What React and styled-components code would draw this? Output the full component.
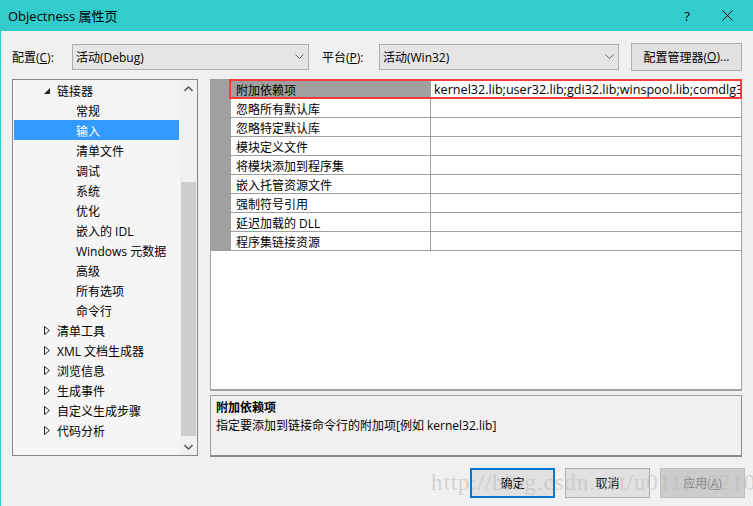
import React from "react";
import styled, { createGlobalStyle } from "styled-components";

const Global = createGlobalStyle`
    html, body {
        margin: 0;
        padding: 0;
        background: #f0f0f0;
    }
    body {
        font-family: "Open Sans", "Noto Sans CJK SC", sans-serif;
        font-size: 12px;
        color: #000;
    }
`;

const Window = styled.div`
    position: relative;
    width: 753px;
    height: 506px;
    box-sizing: border-box;
    border-left: 1px solid #33cccc;
    background: #f0f0f0;
    overflow: hidden;
`;

const TitleBar = styled.div`
    height: 31px;
    background: #33cccc;
    display: flex;
    align-items: center;
    padding-left: 7px;
    padding-right: 6px;
    font-size: 13px;
`;

const TitleText = styled.div`
    flex: 1;
`;

const TitleButton = styled.div`
    width: 40px;
    display: flex;
    justify-content: center;
    align-items: center;
    font-size: 13px;
`;

const Body = styled.div`
    padding: 12px 8px 0 11px;
`;

const ConfigRow = styled.div`
    display: flex;
    align-items: center;
    height: 27px;
`;

const Label = styled.div`
    width: ${(p) => p.w}px;
    white-space: nowrap;
`;

const U = styled.span`
    text-decoration: underline;
`;

const Combo = styled.div`
    width: ${(p) => p.w}px;
    height: 26px;
    box-sizing: border-box;
    border: 1px solid #acacac;
    background: #e5e5e5;
    display: flex;
    align-items: center;
    padding-left: 3px;
    margin-right: ${(p) => p.mr}px;
`;

const ComboText = styled.div`
    flex: 1;
`;

const ComboArrow = styled.div`
    width: 18px;
    display: flex;
    justify-content: center;
`;

const Button = styled.div`
    width: ${(p) => p.w || 85}px;
    height: ${(p) => p.h || 30}px;
    box-sizing: border-box;
    display: flex;
    align-items: center;
    justify-content: center;
    background: ${(p) => (p.disabled ? "#cccccc" : "#e1e1e1")};
    border: ${(p) => (p.primary ? "2px solid #0078d7" : p.disabled ? "1px solid #bfbfbf" : "1px solid #adadad")};
    color: ${(p) => (p.disabled ? "#838383" : "#000")};
`;

const Main = styled.div`
    display: flex;
    margin-top: 9px;
    height: 378px;
`;

const Tree = styled.div`
    width: 186px;
    height: 377px;
    box-sizing: border-box;
    border: 1px solid #828790;
    background: #f5f5f5;
    display: flex;
    margin-right: 12px;
`;

const TreeList = styled.div`
    flex: 1;
    padding: 0 1px;
    overflow: hidden;
`;

const TreeItem = styled.div`
    height: 20px;
    box-sizing: border-box;
    padding-top: 1px;
    display: flex;
    align-items: center;
    padding-left: ${(p) => p.indent}px;
    background: ${(p) => (p.selected ? "#3399ff" : "transparent")};
    color: ${(p) => (p.selected ? "#fff" : "#000")};
    white-space: nowrap;
`;

const Toggle = styled.div`
    width: 13px;
    display: flex;
    align-items: center;
`;

const ScrollBar = styled.div`
    width: 17px;
    display: flex;
    flex-direction: column;
    background: #f0f0f0;
`;

const ScrollArrow = styled.div`
    height: 17px;
    display: flex;
    align-items: center;
    justify-content: center;
`;

const ScrollTrack = styled.div`
    flex: 1;
    display: flex;
    flex-direction: column;
    padding-top: 85px;
    padding-bottom: 2px;
`;

const Thumb = styled.div`
    flex: 1;
    margin: 0 1px;
    background: #cdcdcd;
`;

const RightCol = styled.div`
    width: 532px;
    display: flex;
    flex-direction: column;
`;

const Grid = styled.div`
    height: 313px;
    box-sizing: border-box;
    border: 1px solid #a0a0a0;
    border-bottom-width: 2px;
    background: #fff;
    display: flex;
    align-items: flex-start;
`;

const Gutter = styled.div`
    flex: 0 0 20px;
    height: 171px;
    background: #a0a0a0;
`;

const Rows = styled.div`
    flex: 1;
    min-width: 0;
`;

const Row = styled.div`
    position: relative;
    height: 19px;
    display: flex;
    border-bottom: 1px solid #a0a0a0;
    box-sizing: border-box;

    &::after {
        content: "";
        display: ${(p) => (p.marked ? "block" : "none")};
        position: absolute;
        left: -2px;
        right: -1px;
        top: -1px;
        bottom: -1px;
        border: 2px solid #ff3b3b;
    }
`;

const NameCell = styled.div`
    flex: 0 0 200px;
    padding: 1px 0 0 5px;
    box-sizing: border-box;
    border-right: 1px solid #a0a0a0;
    background: ${(p) => (p.active ? "#a0a0a0" : "#fff")};
    display: flex;
    align-items: center;
    white-space: nowrap;
`;

const ValueCell = styled.div`
    flex: 1;
    min-width: 0;
    padding: 1px 0 0 3px;
    display: flex;
    align-items: center;
    white-space: nowrap;
    overflow: hidden;
    font-size: 12.6px;
`;

const Desc = styled.div`
    margin-top: 4px;
    height: 62px;
    box-sizing: border-box;
    border: 1px solid #a0a0a0;
    border-right-color: #8a8a8a;
    border-bottom: 2px solid #8a8a8a;
    padding: 3px 5px;
    line-height: 18px;
`;

const DescTitle = styled.div`
    font-weight: bold;
`;

const Footer = styled.div`
    display: flex;
    justify-content: flex-end;
    gap: 10px;
    margin-top: 11px;
`;

const Watermark = styled.div`
    position: absolute;
    left: 430px;
    top: 470px;
    font-family: "Liberation Serif", serif;
    font-size: 23px;
    letter-spacing: 0.9px;
    color: rgba(185, 185, 185, 0.55);
    white-space: nowrap;
    pointer-events: none;
`;

const Chevron = ({ up }) => (
    <svg width="9" height="6" viewBox="0 0 9 6">
        <polyline
            points={up ? "0.5,5 4.5,1 8.5,5" : "0.5,1 4.5,5 8.5,1"}
            fill="none"
            stroke="#606060"
            strokeWidth="1.6"
        />
    </svg>
);

const ComboChevron = () => (
    <svg width="9" height="5" viewBox="0 0 9 5">
        <polyline points="0.5,0.5 4.5,4.5 8.5,0.5" fill="none" stroke="#606060" strokeWidth="1" />
    </svg>
);

const Expanded = () => (
    <svg width="6" height="6" viewBox="0 0 6 6">
        <polygon points="6,0 6,6 0,6" fill="#262626" />
    </svg>
);

const Collapsed = () => (
    <svg width="6" height="9" viewBox="0 0 6 9">
        <polygon points="0.5,0.5 5.5,4.5 0.5,8.5" fill="none" stroke="#262626" strokeWidth="1" />
    </svg>
);

const CloseIcon = () => (
    <svg width="11" height="11" viewBox="0 0 11 11">
        <path d="M0.5 0.5 L10.5 10.5 M10.5 0.5 L0.5 10.5" stroke="#000" strokeWidth="1" />
    </svg>
);

const treeItems = [
    { text: "链接器", level: 0, open: true },
    { text: "常规", level: 1 },
    { text: "输入", level: 1, selected: true },
    { text: "清单文件", level: 1 },
    { text: "调试", level: 1 },
    { text: "系统", level: 1 },
    { text: "优化", level: 1 },
    { text: "嵌入的 IDL", level: 1 },
    { text: "Windows 元数据", level: 1 },
    { text: "高级", level: 1 },
    { text: "所有选项", level: 1 },
    { text: "命令行", level: 1 },
    { text: "清单工具", level: 0 },
    { text: "XML 文档生成器", level: 0 },
    { text: "浏览信息", level: 0 },
    { text: "生成事件", level: 0 },
    { text: "自定义生成步骤", level: 0 },
    { text: "代码分析", level: 0 },
];

const props = [
    { name: "附加依赖项", value: "kernel32.lib;user32.lib;gdi32.lib;winspool.lib;comdlg32.lib;advapi32.lib" },
    { name: "忽略所有默认库" },
    { name: "忽略特定默认库" },
    { name: "模块定义文件" },
    { name: "将模块添加到程序集" },
    { name: "嵌入托管资源文件" },
    { name: "强制符号引用" },
    { name: "延迟加载的 DLL" },
    { name: "程序集链接资源" },
];

export default function App() {
    return (
        <Window>
            <Global />
            <TitleBar>
                <TitleText>Objectness 属性页</TitleText>
                <TitleButton>?</TitleButton>
                <TitleButton>
                    <CloseIcon />
                </TitleButton>
            </TitleBar>
            <Body>
                <ConfigRow>
                    <Label w={60}>
                        配置(<U>C</U>):
                    </Label>
                    <Combo w={237} mr={13}>
                        <ComboText>活动(Debug)</ComboText>
                        <ComboArrow>
                            <ComboChevron />
                        </ComboArrow>
                    </Combo>
                    <Label w={57}>
                        平台(<U>P</U>):
                    </Label>
                    <Combo w={240} mr={12}>
                        <ComboText>活动(Win32)</ComboText>
                        <ComboArrow>
                            <ComboChevron />
                        </ComboArrow>
                    </Combo>
                    <Button w={111} h={28}>
                        配置管理器(<U>O</U>)...
                    </Button>
                </ConfigRow>
                <Main>
                    <Tree>
                        <TreeList>
                            {treeItems.map((item) => (
                                <TreeItem
                                    key={item.text}
                                    indent={item.level === 0 ? 30 : 62}
                                    selected={item.selected}
                                >
                                    {item.level === 0 && (
                                        <Toggle>{item.open ? <Expanded /> : <Collapsed />}</Toggle>
                                    )}
                                    {item.text}
                                </TreeItem>
                            ))}
                        </TreeList>
                        <ScrollBar>
                            <ScrollArrow>
                                <Chevron up />
                            </ScrollArrow>
                            <ScrollTrack>
                                <Thumb />
                            </ScrollTrack>
                            <ScrollArrow>
                                <Chevron />
                            </ScrollArrow>
                        </ScrollBar>
                    </Tree>
                    <RightCol>
                        <Grid>
                            <Gutter />
                            <Rows>
                                {props.map((p, i) => (
                                    <Row key={p.name} marked={i === 0}>
                                        <NameCell active={i === 0}>{p.name}</NameCell>
                                        <ValueCell>{p.value}</ValueCell>
                                    </Row>
                                ))}
                            </Rows>
                        </Grid>
                        <Desc>
                            <DescTitle>附加依赖项</DescTitle>
                            <div>指定要添加到链接命令行的附加项[例如 kernel32.lib]</div>
                        </Desc>
                    </RightCol>
                </Main>
                <Footer>
                    <Button primary>确定</Button>
                    <Button>取消</Button>
                    <Button disabled>
                        应用(<U>A</U>)
                    </Button>
                </Footer>
            </Body>
            <Watermark>http://blog.csdn.net/u011140210</Watermark>
        </Window>
    );
}
